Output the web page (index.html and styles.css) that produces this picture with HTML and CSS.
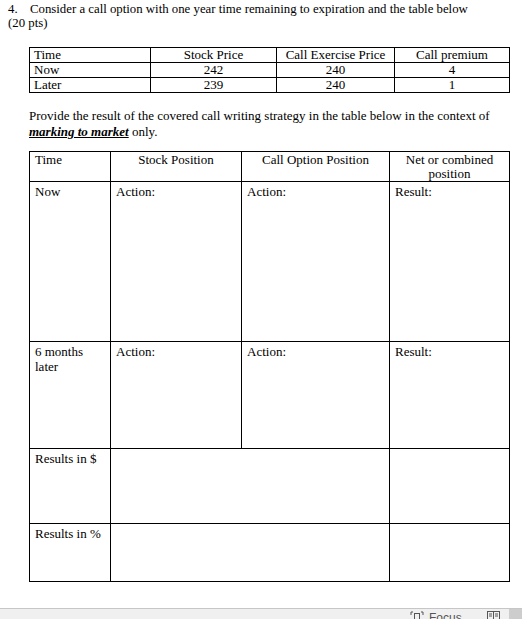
FILE: index.html
```html
<!DOCTYPE html>
<html>
<head>
<meta charset="utf-8">
<link rel="stylesheet" href="styles.css">
</head>
<body>
<div class="page">
  <div class="doc">
    <p class="q"><span class="num">4.</span>Consider a call option with one year time remaining to expiration and the table below<br>(20 pts)</p>
    <table class="t1">
      <tr><td class="l">Time</td><td>Stock Price</td><td>Call Exercise Price</td><td>Call premium</td></tr>
      <tr><td class="l">Now</td><td>242</td><td>240</td><td>4</td></tr>
      <tr><td class="l">Later</td><td>239</td><td>240</td><td>1</td></tr>
    </table>
    <p class="para">Provide the result of the covered call writing strategy in the table below in the context of<br><em class="mk">marking to market</em> only.</p>
    <table class="t2">
      <colgroup><col class="c1"><col class="c2"><col class="c3"><col class="c4"></colgroup>
      <tr class="hdr"><td class="l">Time</td><td>Stock Position</td><td>Call Option Position</td><td>Net or combined position</td></tr>
      <tr class="r-now"><td class="l">Now</td><td class="l">Action:</td><td class="l">Action:</td><td class="l">Result:</td></tr>
      <tr class="r-later"><td class="l">6 months later</td><td class="l">Action:</td><td class="l">Action:</td><td class="l">Result:</td></tr>
      <tr class="r-usd"><td class="l">Results in $</td><td colspan="2"></td><td></td></tr>
      <tr class="r-pct"><td class="l">Results in %</td><td colspan="2"></td><td></td></tr>
    </table>
  </div>
  <div class="status">
    <div class="status-main">
      <span class="focus-ico"><svg width="14" height="10" viewBox="0 0 14 10"><path d="M1 4V1h2M11 1h2v3" fill="none" stroke="#555" stroke-width="1"/><rect x="4.5" y="2.5" width="5" height="7" fill="none" stroke="#555"/></svg></span>
      <span class="focus-txt">Focus</span>
      <span class="read-ico"><svg width="13" height="10" viewBox="0 0 13 10"><rect x="0.5" y="1.5" width="12" height="9" fill="none" stroke="#555"/><path d="M6.5 1.5v9M2 4h3M8 4h3M2 6h3M8 6h3" stroke="#555" stroke-width="1"/></svg></span>
    </div>
    <div class="status-scroll"></div>
  </div>
</div>
</body>
</html>
```
FILE: styles.css
```css
html, body {
  margin: 0;
  padding: 0;
  background: #fff;
}
.page {
  width: 522px;
  height: 619px;
  display: flex;
  flex-direction: column;
  overflow: hidden;
  font-family: "Liberation Serif", "Times New Roman", serif;
  font-size: 13px;
  color: #000;
}
.doc {
  flex: 1;
  padding-left: 8px;
}
.q {
  margin: 2px 0 0 0;
  line-height: 14px;
  font-size: 12.8px;
}
.num {
  display: inline-block;
  width: 22px;
}
.t1 {
  margin: 17px 0 0 21px;
  width: 481px;
  border-collapse: collapse;
  table-layout: fixed;
}
.t1 td {
  border: 1px solid #000;
  height: 14px;
  line-height: 14px;
  padding: 0 4px;
  text-align: center;
}
.t1 td:nth-child(1) { width: 112px; }
.t1 td:nth-child(2) { width: 117px; }
.t1 td:nth-child(3) { width: 109px; }
.t1 td.l { text-align: left; }
.para {
  margin: 15px 0 0 21px;
  line-height: 16px;
}
.mk {
  font-weight: bold;
  text-decoration: underline;
}
.t2 {
  margin: 11px 0 0 21px;
  width: 481px;
  border-collapse: collapse;
  table-layout: fixed;
}
.t2 .c1 { width: 81px; }
.t2 .c2 { width: 131px; }
.t2 .c3 { width: 148px; }
.t2 .c4 { width: 120px; }
.t2 td {
  border: 1px solid #000;
  padding: 2px 5px 0 5px;
  vertical-align: top;
  text-align: center;
  line-height: 15px;
}
.t2 td.l { text-align: left; }
.t2 .hdr td { padding-top: 1px; line-height: 14px; }
.t2 .r-now td { height: 157px; }
.t2 .r-later td { height: 104px; }
.t2 .r-usd td { height: 72px; }
.t2 .r-pct td { height: 55px; }
.status {
  height: 10px;
  border-top: 1px solid #c6c6c6;
  background: #f0f0f0;
  display: flex;
  overflow: hidden;
}
.status-main {
  flex: 1;
  display: flex;
  align-items: flex-start;
  padding-left: 410px;
  font-family: "Liberation Sans", Arial, sans-serif;
  font-size: 12px;
  color: #555;
}
.focus-ico { margin-top: 2px; display: inline-flex; }
.focus-txt { margin-left: 5px; line-height: 14px; margin-top: 2px; }
.read-ico { margin-left: 25px; margin-top: 1px; display: inline-flex; }
.status-scroll {
  width: 13px;
  background: #cdcdcd;
}
```
